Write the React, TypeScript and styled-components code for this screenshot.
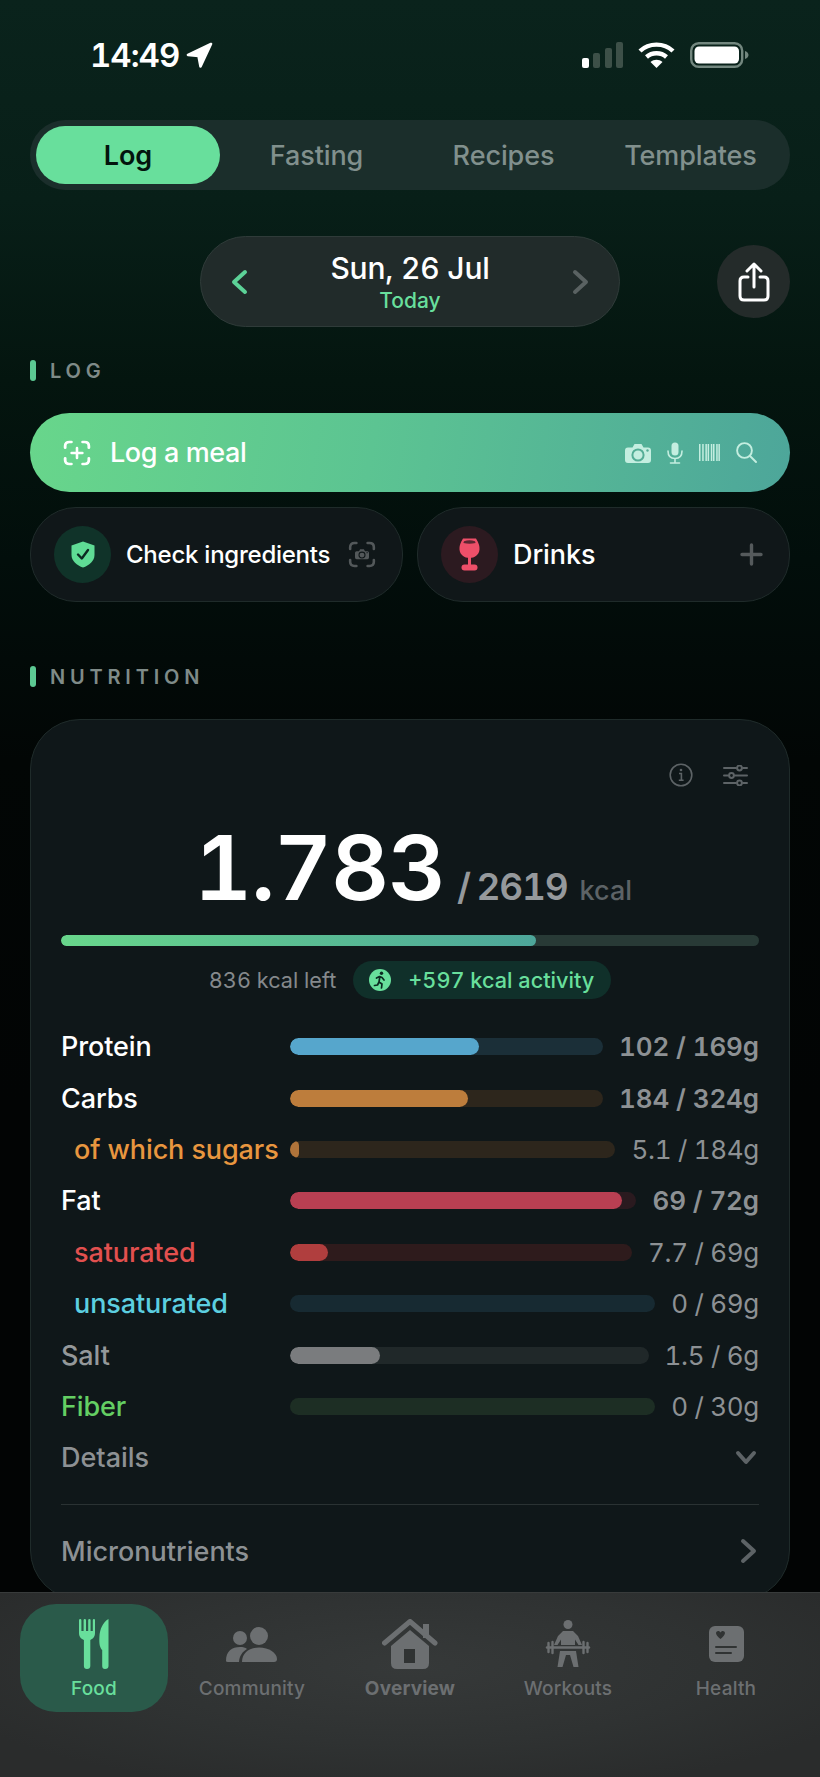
import * as React from 'react';
import styled, { createGlobalStyle } from 'styled-components';

const GREEN = '#68df9c';

const GlobalStyle = createGlobalStyle`
    html, body {
        margin: 0;
        padding: 0;
        background: #020404;
    }
    * {
        box-sizing: border-box;
    }
    body {
        font-family: Inter, "Noto Sans", "Liberation Sans", sans-serif;
        font-variant-numeric: tabular-nums;
    }
`;

const Screen = styled.div`
    width: 820px;
    height: 1777px;
    display: flex;
    flex-direction: column;
    overflow: hidden;
    background: linear-gradient(180deg, #0a231c 0, #081f18 200px, #04150f 380px, #020e0b 560px, #020605 760px, #020404 1100px);
`;

const StatusBar = styled.div`
    flex: none;
    height: 110px;
    padding: 0 71px 0 90px;
    display: flex;
    align-items: center;
    justify-content: space-between;
`;

const Clock = styled.div`
    display: flex;
    align-items: center;
    gap: 7px;
    color: #fff;
    font-size: 33px;
    font-weight: 600;
    letter-spacing: -1px;
`;

const StatusIcons = styled.div`
    display: flex;
    align-items: center;
    gap: 15px;
`;

const Main = styled.div`
    flex: 1;
    min-height: 0;
    padding: 10px 30px 0;
    overflow: hidden;
`;

const TopTabs = styled.div`
    height: 70px;
    padding: 6px;
    display: grid;
    grid-template-columns: repeat(4, 1fr);
    border-radius: 35px;
    background: #1b2e2b;
`;

const TopTab = styled.div<{ $active?: boolean }>`
    display: flex;
    align-items: center;
    justify-content: center;
    margin-right: ${p => (p.$active ? 3 : 0)}px;
    border-radius: 29px;
    font-size: 27px;
    font-weight: ${p => (p.$active ? 600 : 500)};
    letter-spacing: -0.1px;
    color: ${p => (p.$active ? '#03140d' : '#81908d')};
    background: ${p => (p.$active ? GREEN : 'transparent')};
`;

const DateRow = styled.div`
    margin-top: 46px;
    display: grid;
    grid-template-columns: 1fr 420px 1fr;
    align-items: center;
`;

const DatePill = styled.div`
    grid-column: 2;
    height: 91px;
    padding: 0 30px;
    display: flex;
    align-items: center;
    justify-content: space-between;
    border-radius: 46px;
    background: #212b2a;
    border: 1px solid #2f3b39;
`;

const DateText = styled.div`
    display: flex;
    flex-direction: column;
    align-items: center;
    margin-top: -1px;
`;

const DateTitle = styled.div`
    color: #fff;
    font-size: 30px;
    line-height: 38px;
    font-weight: 500;
    letter-spacing: -0.2px;
`;

const DateSub = styled.div`
    color: ${GREEN};
    font-size: 21px;
    line-height: 27px;
    font-weight: 500;
`;

const ShareButton = styled.div`
    justify-self: end;
    width: 73px;
    height: 73px;
    border-radius: 50%;
    background: #242b2a;
    display: flex;
    align-items: center;
    justify-content: center;
`;

const SectionTitle = styled.div<{ $top: number }>`
    margin-top: ${p => p.$top}px;
    height: 21px;
    display: flex;
    align-items: center;
    gap: 14px;
    color: #7f8b88;
    font-size: 20px;
    font-weight: 600;
    letter-spacing: 4.8px;
    &::before {
        content: '';
        width: 6px;
        height: 21px;
        border-radius: 3px;
        background: #5cc993;
    }
`;

const LogButton = styled.div`
    margin-top: 32px;
    height: 79px;
    padding: 0 33px 0 33px;
    display: flex;
    align-items: center;
    gap: 19px;
    border-radius: 40px;
    color: #fff;
    font-size: 27px;
    font-weight: 500;
    letter-spacing: -0.4px;
    background: linear-gradient(100deg, #68d68b 0%, #5cc492 45%, #4da69a 100%);
`;

const LogIcons = styled.div`
    margin-left: auto;
    display: flex;
    align-items: center;
    gap: 16px;
`;

const QuickRow = styled.div`
    margin-top: 15px;
    display: grid;
    grid-template-columns: 1fr 1fr;
    gap: 14px;
`;

const QuickCard = styled.div`
    height: 95px;
    padding: 0 26px 0 23px;
    display: flex;
    align-items: center;
    border-radius: 46px;
    background: #101719;
    border: 1px solid #1f2b2a;
`;

const QuickIcon = styled.div<{ $bg: string }>`
    flex: none;
    width: 57px;
    height: 57px;
    border-radius: 50%;
    background: ${p => p.$bg};
    display: flex;
    align-items: center;
    justify-content: center;
`;

const QuickLabel = styled.div<{ $size: number; $tight: number }>`
    flex: 1;
    margin-left: 15px;
    color: #fff;
    font-size: ${p => p.$size}px;
    font-weight: 500;
    letter-spacing: ${p => p.$tight}px;
    white-space: nowrap;
`;

const NutritionCard = styled.div`
    margin-top: 32px;
    height: 881px;
    padding: 43px 30px 0;
    border-radius: 50px;
    background: #0f1719;
    border: 1px solid #1f2b2a;
`;

const CardTools = styled.div`
    height: 24px;
    padding-right: 11px;
    display: flex;
    justify-content: flex-end;
    align-items: center;
    gap: 30px;
`;

const Total = styled.div`
    margin-top: 36px;
    height: 90px;
    display: flex;
    justify-content: center;
    align-items: baseline;
    gap: 12px;
    padding-left: 6px;
    line-height: 90px;
    white-space: nowrap;
`;

const TotalValue = styled.span`
    color: #fff;
    font-size: 90px;
    font-weight: 600;
    letter-spacing: -1.2px;
`;

const TotalGoal = styled.span`
    color: #95999c;
    font-size: 37px;
    font-weight: 600;
    letter-spacing: -1.2px;
    word-spacing: -2px;
`;

const TotalUnit = styled.span`
    color: #5d6366;
    font-size: 27px;
    font-weight: 500;
`;

const Progress = styled.div`
    margin-top: 22px;
    height: 11px;
    border-radius: 6px;
    background: #283a36;
    overflow: hidden;
`;

const ProgressFill = styled.div`
    height: 100%;
    border-radius: 6px;
    background: linear-gradient(90deg, #68d68b, #4da69a);
`;

const Summary = styled.div`
    margin-top: 15px;
    display: flex;
    justify-content: center;
    align-items: center;
    gap: 17px;
    color: #85898c;
    font-size: 21.7px;
`;

const ActivityPill = styled.div`
    height: 38px;
    padding: 0 17px 0 16px;
    display: flex;
    align-items: center;
    gap: 17px;
    border-radius: 19px;
    background: #10302a;
    color: ${GREEN};
    font-weight: 500;
`;

const ActivityDot = styled.div`
    width: 22px;
    height: 22px;
    border-radius: 50%;
    background: ${GREEN};
    display: flex;
    align-items: center;
    justify-content: center;
`;

const Macros = styled.div`
    margin-top: 22px;
`;

const MacroRow = styled.div`
    height: 51.4px;
    display: flex;
    align-items: center;
`;

const MacroLabel = styled.div<{ $color: string; $indent?: boolean }>`
    flex: none;
    width: 229px;
    padding-left: ${p => (p.$indent ? 13 : 0)}px;
    color: ${p => p.$color};
    font-size: 27px;
    font-weight: 500;
    letter-spacing: -0.1px;
    white-space: nowrap;
`;

const MacroTrack = styled.div<{ $color: string }>`
    flex: 1;
    height: 17px;
    border-radius: 9px;
    background: ${p => p.$color};
    overflow: hidden;
`;

const MacroFill = styled.div<{ $color: string }>`
    height: 100%;
    border-radius: 9px;
    background: ${p => p.$color};
`;

const MacroValue = styled.div<{ $strong?: boolean }>`
    flex: none;
    margin-left: 16px;
    color: #8d9194;
    font-size: 26px;
    font-weight: ${p => (p.$strong ? 600 : 400)};
    letter-spacing: ${p => (p.$strong ? -0.1 : -0.3)}px;
    white-space: nowrap;
`;

const LinkRow = styled.div`
    height: 51.5px;
    display: flex;
    align-items: center;
    justify-content: space-between;
    padding-right: 2px;
    color: #8d9194;
    font-size: 27px;
    font-weight: 500;
`;

const Divider = styled.div`
    margin: 20px 0 21px;
    height: 1px;
    background: #2a3233;
`;

const BottomBar = styled.div`
    flex: none;
    height: 185px;
    padding: 11px 15px 0;
    display: grid;
    grid-template-columns: repeat(5, 1fr);
    align-items: start;
    border-top: 1px solid #383b3b;
    background: radial-gradient(ellipse 60% 70% at 50% 40%, #363939 0%, #2f3232 60%, #2a2c2c 100%);
`;

const BarItem = styled.div<{ $active?: boolean }>`
    height: 108px;
    margin: 0 5px;
    padding-top: 15px;
    display: flex;
    flex-direction: column;
    align-items: center;
    border-radius: 36px;
    background: ${p => (p.$active ? '#2a5a4a' : 'transparent')};
    color: ${p => (p.$active ? GREEN : '#6c6f71')};
`;

const BarIcon = styled.div`
    height: 50px;
    display: flex;
    align-items: center;
    justify-content: center;
`;

const BarLabel = styled.div<{ $bold?: boolean }>`
    margin-top: 8px;
    font-size: 19px;
    line-height: 24px;
    font-weight: ${p => (p.$bold ? 700 : 500)};
    letter-spacing: 0.2px;
`;

const macros = [
    { name: 'Protein', color: '#fff', fill: '#56a6cc', track: '#1b2f38', value: 102, goal: 169, text: '102 / 169g', strong: true },
    { name: 'Carbs', color: '#fff', fill: '#bd7d3c', track: '#2d261c', value: 184, goal: 324, text: '184 / 324g', strong: true },
    { name: 'of which sugars', color: '#e8963f', fill: '#b0743a', track: '#2d261c', value: 5.1, goal: 184, text: '5.1 / 184g', indent: true },
    { name: 'Fat', color: '#fff', fill: '#b93f52', track: '#2a1a1f', value: 69, goal: 72, text: '69 / 72g', strong: true },
    { name: 'saturated', color: '#e2504f', fill: '#b03e3e', track: '#2e1b1c', value: 7.7, goal: 69, text: '7.7 / 69g', indent: true },
    { name: 'unsaturated', color: '#5ccfe0', fill: '#3aa', track: '#172a32', value: 0, goal: 69, text: '0 / 69g', indent: true },
    { name: 'Salt', color: '#94989a', fill: '#7a7c7e', track: '#202829', value: 1.5, goal: 6, text: '1.5 / 6g' },
    { name: 'Fiber', color: '#64cf63', fill: '#64cf63', track: '#1d2e24', value: 0, goal: 30, text: '0 / 30g' },
];

const Chevron = ({ dir, color }: { dir: 'left' | 'right' | 'down'; color: string }) => {
    const d = dir === 'left' ? 'M14 3 L3 13 L14 23' : dir === 'right' ? 'M4 3 L15 13 L4 23' : 'M3 4 L11 13 L19 4';
    const w = dir === 'down' ? 22 : 18;
    const h = dir === 'down' ? 17 : 26;
    return (
        <svg width={w} height={h} viewBox={`0 0 ${w} ${h}`} fill="none" stroke={color} strokeWidth="4" strokeLinecap="round" strokeLinejoin="round">
            <path d={d} />
        </svg>
    );
};

const SignalIcon = () => (
    <svg width="41" height="26" viewBox="0 0 41 26">
        <rect x="0" y="16" width="7" height="10" rx="2" fill="#fff" />
        <rect x="11" y="11" width="7" height="15" rx="2" fill="#3d5048" />
        <rect x="23" y="6" width="7" height="20" rx="2" fill="#3d5048" />
        <rect x="34" y="0" width="7" height="26" rx="2" fill="#3d5048" />
    </svg>
);

const WifiIcon = () => (
    <svg width="37" height="26" viewBox="0 0 37 26" fill="none" stroke="#fff" strokeWidth="4.4">
        <path d="M2 9 C11 0.5 26 0.5 35 9" />
        <path d="M8.5 15 C14 10 23 10 28.5 15" />
        <path d="M18.5 26 L12.5 20 C16 17 21 17 24.5 20 Z" fill="#fff" stroke="none" />
    </svg>
);

const BatteryIcon = () => (
    <svg width="59" height="26" viewBox="0 0 59 26">
        <rect x="1.2" y="1.2" width="51" height="23.6" rx="7.5" fill="none" stroke="#73877f" strokeWidth="2.4" />
        <rect x="4.5" y="4.5" width="44.5" height="17" rx="4.5" fill="#fff" />
        <path d="M55 9 C57.5 10 58.5 11.5 58.5 13 C58.5 14.5 57.5 16 55 17 Z" fill="#73877f" />
    </svg>
);

const LocationIcon = () => (
    <svg width="27" height="26" viewBox="0 0 27 26">
        <path d="M25 2 L2 13 L12.5 14 L14.5 24.5 Z" fill="#fff" stroke="#fff" strokeWidth="2.6" strokeLinejoin="round" />
    </svg>
);

const ShareIcon = () => (
    <svg width="32" height="40" viewBox="0 0 32 40" fill="none" stroke="#fff" strokeWidth="3" strokeLinecap="round" strokeLinejoin="round">
        <path d="M10 15 H6 Q2 15 2 19 V34 Q2 38 6 38 H26 Q30 38 30 34 V19 Q30 15 26 15 H22" />
        <path d="M16 25 V2 M9 9 L16 2 L23 9" />
    </svg>
);

const ScanCorners = ({ size, color, width }: { size: number; color: string; width: number }) => (
    <g fill="none" stroke={color} strokeWidth={width} strokeLinecap="round">
        <path d={`M${size * 0.3} 2 H6 Q2 2 2 6 V${size * 0.3}`} />
        <path d={`M${size * 0.7} 2 H${size - 6} Q${size - 2} 2 ${size - 2} 6 V${size * 0.3}`} />
        <path d={`M${size * 0.3} ${size - 2} H6 Q2 ${size - 2} 2 ${size - 6} V${size * 0.7}`} />
        <path d={`M${size * 0.7} ${size - 2} H${size - 6} Q${size - 2} ${size - 2} ${size - 2} ${size - 6} V${size * 0.7}`} />
    </g>
);

const ScanPlusIcon = () => (
    <svg width="28" height="26" viewBox="0 0 26 26" preserveAspectRatio="none">
        <ScanCorners size={26} color="#fff" width={2.6} />
        <path d="M13 8 V18 M8 13 H18" stroke="#fff" strokeWidth="2.4" strokeLinecap="round" />
    </svg>
);

const CameraGlyph = ({ fill, hole }: { fill: string; hole: string }) => (
    <>
        <path
            d="M3 5.5 H7.5 L9.5 2 H16.5 L18.5 5.5 H23 Q26 5.5 26 8.5 V18 Q26 21 23 21 H3 Q0 21 0 18 V8.5 Q0 5.5 3 5.5 Z"
            fill={fill}
        />
        <circle cx="13" cy="13" r="5.6" fill="none" stroke={hole} strokeWidth="2" />
        <circle cx="22.5" cy="8.5" r="1.2" fill={hole} />
    </>
);

const CameraIcon = () => (
    <svg width="26" height="22" viewBox="0 0 26 22">
        <CameraGlyph fill="#c4eee0" hole="#54ad96" />
    </svg>
);

const MicIcon = () => (
    <svg width="16" height="22" viewBox="0 0 16 22" fill="none" stroke="#c4eee0" strokeWidth="1.6" strokeLinecap="round">
        <rect x="4.5" y="0.5" width="7" height="13" rx="3.5" fill="#c4eee0" stroke="none" />
        <path d="M1 9 Q1 16.5 8 16.5 Q15 16.5 15 9 M8 16.5 V21 M3.5 21 H12.5" />
    </svg>
);

const BarcodeIcon = () => (
    <svg width="21" height="17" viewBox="0 0 21 17" fill="#c4eee0">
        {[0, 3.2, 6.4, 8.6, 11.8, 14, 17.2, 19.4].map(x => (
            <rect key={x} x={x} y="0" width="1.5" height="17" />
        ))}
    </svg>
);

const SearchIcon = () => (
    <svg width="21" height="21" viewBox="0 0 21 21" fill="none" stroke="#c4eee0" strokeWidth="1.9" strokeLinecap="round">
        <circle cx="8.5" cy="8.5" r="7.4" />
        <path d="M14 14 L20 20" />
    </svg>
);

const ShieldIcon = () => (
    <svg width="24" height="27" viewBox="0 0 24 27">
        <path d="M12 0.5 L23.5 4.5 V14 C23.5 20 18 24.5 12 26.5 C6 24.5 0.5 20 0.5 14 V4.5 Z" fill="#5fdc95" />
        <path d="M7 13.5 L10.8 17.5 L17 9" fill="none" stroke="#0c2a22" strokeWidth="2.4" strokeLinecap="round" strokeLinejoin="round" />
    </svg>
);

const CameraScanIcon = () => (
    <svg width="28" height="27" viewBox="0 0 26 26" preserveAspectRatio="none">
        <ScanCorners size={26} color="#53585a" width={2.4} />
        <g transform="translate(6.5 7) scale(0.5)">
            <CameraGlyph fill="#53585a" hole="#101719" />
        </g>
    </svg>
);

const WineIcon = () => (
    <svg width="21" height="33" viewBox="0 0 21 33" fill="#ee4f69">
        <path d="M4 0.5 H17 Q21 7 20.5 11.5 C20 17 15.5 20 10.5 20 C5.5 20 1 17 0.5 11.5 Q0 7 4 0.5 Z" />
        <rect x="9" y="19" width="3" height="9" />
        <rect x="2.5" y="26.5" width="16" height="6" rx="3" />
        <path d="M5 3.2 Q10.5 1.4 16 3.2 L16.6 5 Q10.5 6.4 4.4 5 Z" fill="#2c1a20" opacity="0.75" />
    </svg>
);

const PlusIcon = () => (
    <svg width="23" height="23" viewBox="0 0 23 23" stroke="#555a5c" strokeWidth="3.4" strokeLinecap="round">
        <path d="M11.5 2 V21 M2 11.5 H21" />
    </svg>
);

const InfoIcon = () => (
    <svg width="24" height="24" viewBox="0 0 24 24" fill="none" stroke="#5d6366" strokeWidth="1.6">
        <circle cx="12" cy="12" r="10.8" />
        <path d="M10 10.5 H12.4 V17 M9.8 17.2 H14.6" strokeWidth="1.6" />
        <circle cx="12" cy="7" r="1.3" fill="#5d6366" stroke="none" />
    </svg>
);

const SlidersIcon = () => (
    <svg width="25" height="21" viewBox="0 0 25 21" fill="none" stroke="#5d6366" strokeWidth="2" strokeLinecap="round">
        <path d="M1 3 H13 M20 3 H24 M1 10.5 H5 M12 10.5 H24 M1 18 H13 M20 18 H24" />
        <circle cx="16.5" cy="3" r="2.4" />
        <circle cx="8.5" cy="10.5" r="2.4" />
        <circle cx="16.5" cy="18" r="2.4" />
    </svg>
);

const RunnerIcon = () => (
    <svg width="14" height="18" viewBox="0 0 14 18" fill="none" stroke="#0c2a22" strokeWidth="1.7" strokeLinecap="round" strokeLinejoin="round">
        <circle cx="8.5" cy="2.2" r="1.7" fill="#0c2a22" stroke="none" />
        <path d="M3.5 7 L6.5 5.5 L9 6.5 L11 9 M6.8 6 L6 11 L9 13 L8.5 17 M6 11 L4.5 14 L1.5 14.5" />
    </svg>
);

const ForkKnifeIcon = () => (
    <svg width="30" height="50" viewBox="0 0 30 50" fill={GREEN}>
        <path d="M0 1.2 Q0 0 1.2 0 Q2.4 0 2.4 1.2 V12 H4.6 V1.2 Q4.6 0 5.8 0 Q7 0 7 1.2 V12 H9.2 V1.2 Q9.2 0 10.4 0 Q11.6 0 11.6 1.2 V12 H13.8 V1.2 Q13.8 0 15 0 Q16 0 16 1.2 V14 C16 18 13.5 20 11.3 21 V47 Q11.3 50 8 50 Q4.9 50 4.9 47 V21 C2.5 20 0 18 0 14 Z" />
        <path d="M29.5 0 V47 Q29.5 50 26 50 Q23.2 50 23.2 47 V31 C21 29 20 25 20.4 18 C20.8 10 24 3 29.5 0 Z" />
    </svg>
);

const PeopleIcon = () => (
    <svg width="52" height="36" viewBox="0 0 52 36" fill="#6c6f71">
        <circle cx="14" cy="12" r="7" />
        <circle cx="33" cy="10" r="9" />
        <path d="M0 35 C0 25 6 21 14 21 C17 21 19.5 21.5 21 23 C16 26 13.5 30 13 36 H2 Q0 36 0 35 Z" />
        <path d="M16 36 C16 27 23 21.5 33 21.5 C43 21.5 51 27 51 33 Q51 36 48 36 Z" />
    </svg>
);

const HouseIcon = () => (
    <svg width="56" height="50" viewBox="0 0 56 50" fill="#6c6f71">
        <path d="M2.5 24 L28 2.5 L53 24" fill="none" stroke="#6c6f71" strokeWidth="5" strokeLinecap="round" strokeLinejoin="round" />
        <rect x="41" y="5" width="6" height="14" />
        <path d="M28 11 L47 27 V44 Q47 50 41 50 H15 Q9 50 9 44 V27 Z" />
        <rect x="22" y="30" width="11" height="14" fill="#303333" />
    </svg>
);

const LifterIcon = () => (
    <svg width="46" height="48" viewBox="0 0 46 48" fill="#6c6f71" stroke="#6c6f71" strokeLinecap="round" strokeLinejoin="round">
        <circle cx="23" cy="4.5" r="4.5" stroke="none" />
        <path d="M18 11 H28 L33 16 L37 25 H33.5 L30 19.5 V25 H16 V19.5 L12.5 25 H9 L13 16 Z" stroke="none" />
        <path d="M2 27.5 H44" fill="none" strokeWidth="2.4" />
        <path d="M3.5 23 V32 M7.5 22 V33 M38.5 22 V33 M42.5 23 V32" fill="none" strokeWidth="2.4" />
        <path d="M15 31 H31 L33.5 47 H28.5 L25 35 H21 L17.5 47 H12.5 Z" stroke="none" />
    </svg>
);

const HealthIcon = () => (
    <svg width="35" height="36" viewBox="0 0 35 36">
        <rect x="0" y="0" width="35" height="36" rx="6" fill="#6c6f71" />
        <path d="M11.5 13 C7 9.5 6.5 7 7.5 5.7 C9 4.3 10.8 5 11.5 6.6 C12.2 5 14 4.3 15.5 5.7 C16.5 7 16 9.5 11.5 13 Z" fill="#303333" />
        <path d="M7 21 H27 M7 27 H22" stroke="#303333" strokeWidth="2" strokeLinecap="round" />
    </svg>
);

const tabs = ['Log', 'Fasting', 'Recipes', 'Templates'];

const barItems = [
    { label: 'Food', icon: <ForkKnifeIcon />, active: true },
    { label: 'Community', icon: <PeopleIcon /> },
    { label: 'Overview', icon: <HouseIcon />, bold: true },
    { label: 'Workouts', icon: <LifterIcon /> },
    { label: 'Health', icon: <HealthIcon /> },
];

export default function App() {
    return (
        <Screen>
            <GlobalStyle />
            <StatusBar>
                <Clock>
                    14:49
                    <LocationIcon />
                </Clock>
                <StatusIcons>
                    <SignalIcon />
                    <WifiIcon />
                    <BatteryIcon />
                </StatusIcons>
            </StatusBar>

            <Main>
                <TopTabs>
                    {tabs.map((t, i) => (
                        <TopTab key={t} $active={i === 0}>{t}</TopTab>
                    ))}
                </TopTabs>

                <DateRow>
                    <DatePill>
                        <Chevron dir="left" color="#5cd297" />
                        <DateText>
                            <DateTitle>Sun, 26 Jul</DateTitle>
                            <DateSub>Today</DateSub>
                        </DateText>
                        <Chevron dir="right" color="#5a6262" />
                    </DatePill>
                    <ShareButton>
                        <ShareIcon />
                    </ShareButton>
                </DateRow>

                <SectionTitle $top={33}>LOG</SectionTitle>

                <LogButton>
                    <ScanPlusIcon />
                    Log a meal
                    <LogIcons>
                        <CameraIcon />
                        <MicIcon />
                        <BarcodeIcon />
                        <SearchIcon />
                    </LogIcons>
                </LogButton>

                <QuickRow>
                    <QuickCard>
                        <QuickIcon $bg="#103329">
                            <ShieldIcon />
                        </QuickIcon>
                        <QuickLabel $size={24} $tight={-0.25}>Check ingredients</QuickLabel>
                        <CameraScanIcon />
                    </QuickCard>
                    <QuickCard>
                        <QuickIcon $bg="#2c1a20">
                            <WineIcon />
                        </QuickIcon>
                        <QuickLabel $size={27} $tight={-0.1}>Drinks</QuickLabel>
                        <PlusIcon />
                    </QuickCard>
                </QuickRow>

                <SectionTitle $top={64}>NUTRITION</SectionTitle>

                <NutritionCard>
                    <CardTools>
                        <InfoIcon />
                        <SlidersIcon />
                    </CardTools>

                    <Total>
                        <TotalValue>1.783</TotalValue>
                        <TotalGoal>/ 2619</TotalGoal>
                        <TotalUnit>kcal</TotalUnit>
                    </Total>

                    <Progress>
                        <ProgressFill style={{ width: `${(1783 / 2619) * 100}%` }} />
                    </Progress>

                    <Summary>
                        836 kcal left
                        <ActivityPill>
                            <ActivityDot>
                                <RunnerIcon />
                            </ActivityDot>
                            +597 kcal activity
                        </ActivityPill>
                    </Summary>

                    <Macros>
                        {macros.map(m => (
                            <MacroRow key={m.name}>
                                <MacroLabel $color={m.color} $indent={m.indent}>{m.name}</MacroLabel>
                                <MacroTrack $color={m.track}>
                                    <MacroFill $color={m.fill} style={{ width: `${(m.value / m.goal) * 100}%` }} />
                                </MacroTrack>
                                <MacroValue $strong={m.strong}>{m.text}</MacroValue>
                            </MacroRow>
                        ))}
                        <LinkRow>
                            Details
                            <Chevron dir="down" color="#5d6366" />
                        </LinkRow>
                    </Macros>

                    <Divider />

                    <LinkRow>
                        Micronutrients
                        <Chevron dir="right" color="#5d6366" />
                    </LinkRow>
                </NutritionCard>
            </Main>

            <BottomBar>
                {barItems.map(b => (
                    <BarItem key={b.label} $active={b.active}>
                        <BarIcon>{b.icon}</BarIcon>
                        <BarLabel $bold={b.bold}>{b.label}</BarLabel>
                    </BarItem>
                ))}
            </BottomBar>
        </Screen>
    );
}
